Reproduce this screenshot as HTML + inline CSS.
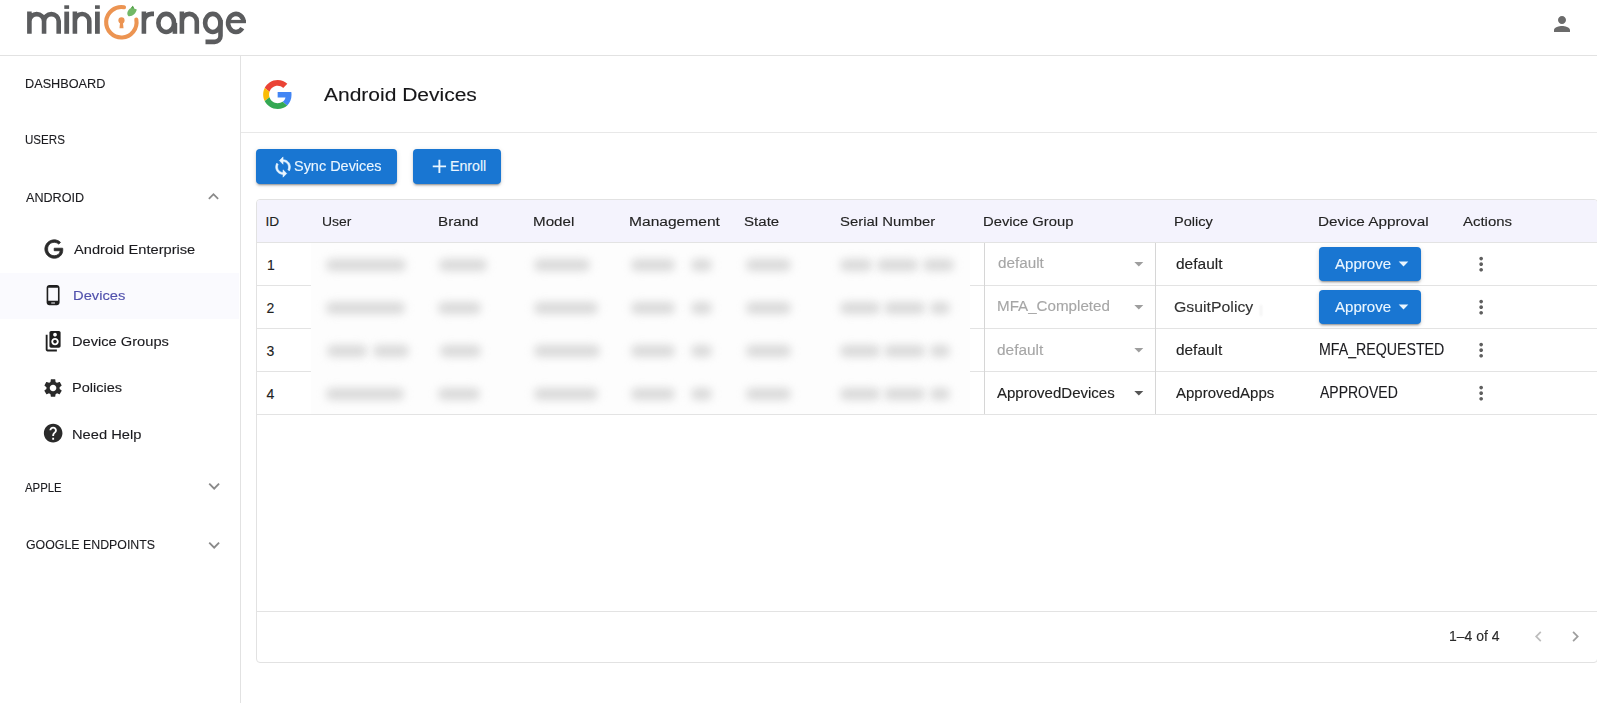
<!DOCTYPE html>
<html><head><meta charset="utf-8"><title>Android Devices</title>
<style>
html,body{margin:0;padding:0;}
body{width:1597px;height:703px;overflow:hidden;background:#fff;position:relative;font-family:"Liberation Sans",sans-serif;}
.t{position:absolute;white-space:nowrap;line-height:1;transform-origin:0 0;-webkit-text-stroke:0.12px currentColor;}
.ic{position:absolute;overflow:visible;}
.ln{position:absolute;background:#e3e3e3;}
.btn{position:absolute;background:#1976d2;border-radius:4px;box-shadow:0 3px 1px -2px rgba(0,0,0,.2),0 2px 2px 0 rgba(0,0,0,.14),0 1px 5px 0 rgba(0,0,0,.12);}
.blob{position:absolute;background:#d9d9d9;border-radius:6px;filter:blur(4px);}
</style></head><body>
<svg class="ic" style="left:0;top:0;width:260px;height:55px" viewBox="0 0 260 55">
<g fill="none" stroke="#5b5c5e" stroke-width="4.6">
<path d="M29.4 11.6 V33.8 M29.4 21.2 A7.33 7.33 0 0 1 44.05 21.2 V33.8 M44.05 21.2 A7.33 7.33 0 0 1 58.7 21.2 V33.8"/>
<path d="M74.9 11.6 V33.8 M74.9 21.2 A7.2 7.2 0 0 1 89.3 21.2 V33.8"/>
<path d="M143.9 11.6 V33.8 M143.9 21.5 A7.6 7.6 0 0 1 151.5 13.9 H154"/>
<ellipse cx="166.2" cy="22.95" rx="7.85" ry="9.05"/>
<path d="M174.9 22.95 V33.8"/>
<path d="M181.9 11.6 V33.8 M181.9 21.35 A7.45 7.45 0 0 1 196.8 21.35 V33.8"/>
<ellipse cx="212.8" cy="22.95" rx="7.7" ry="9.05"/>
<path d="M220.5 20 V36 A5.9 5.9 0 0 1 214.6 41.9 H205.5"/>
<path d="M243.7 22.95 A7.8 9.05 0 1 0 242.3 28.1"/>
</g>
<g fill="#5b5c5e">
<rect x="227.5" y="19.9" width="18.4" height="3.3"/>
<rect x="64.3" y="11.6" width="4.8" height="22.2"/>
<rect x="64.3" y="5.3" width="4.8" height="3.6"/>
<rect x="95" y="11.6" width="4.8" height="22.2"/>
<rect x="95" y="5.3" width="4.8" height="3.6"/>
</g>
<path d="M136.32 19.61 A15.2 15.2 0 1 1 123.99 7.28" fill="none" stroke="#ec9452" stroke-width="4.1" stroke-linecap="round"/>
<circle cx="121.5" cy="20.4" r="3.1" fill="#ec9452"/>
<path d="M120.2 21 L122.8 21 L123.5 28.2 L119.5 28.2 Z" fill="#ec9452"/>
<path d="M128.5 16.3 C126.3 14 127.3 10 131 8 L132.8 5.8 L134.2 8.6 L136.8 9.6 C136 13.5 132.5 16.8 128.5 16.3 Z" fill="#72b866"/>
<path d="M131 8 L132.8 5.8 L134.2 8.6 Z" fill="#55a04a"/>
</svg>

<div class="ln" style="left:0;top:55px;width:1597px;height:1px;background:#e2e2e2"></div>
<div class="ln" style="left:240px;top:56px;width:1px;height:647px;background:#e2e2e2"></div>
<div style="position:absolute;left:0;top:273px;width:239px;height:46px;background:#fafafe"></div>
<div class="ln" style="left:241px;top:132px;width:1356px;height:1px;background:#e8e8e8"></div>
<svg class="ic" style="left:263.3px;top:79.8px;width:29.3px;height:29px" viewBox="0 0 48 48">
<path fill="#EA4335" d="M24 9.5c3.54 0 6.71 1.22 9.21 3.6l6.85-6.85C35.9 2.38 30.47 0 24 0 14.62 0 6.51 5.38 2.56 13.22l7.980 6.19C12.43 13.72 17.74 9.5 24 9.5z"/>
<path fill="#4285F4" d="M46.98 24.55c0-1.57-.15-3.09-.38-4.55H24v9.02h12.94c-.58 2.96-2.26 5.48-4.78 7.18l7.73 6c4.51-4.18 7.090-10.36 7.09-17.65z"/>
<path fill="#FBBC05" d="M10.53 28.59c-.48-1.45-.76-2.99-.76-4.59s.27-3.14.76-4.59l-7.98-6.19C.92 16.46 0 20.12 0 24c0 3.88.92 7.54 2.56 10.78l7.97-6.19z"/>
<path fill="#34A853" d="M24 48c6.48 0 11.93-2.13 15.89-5.81l-7.73-6c-2.15 1.450-4.92 2.3-8.16 2.3-6.26 0-11.57-4.22-13.47-9.91l-7.98 6.19C6.51 42.62 14.62 48 24 48z"/>
</svg>
<div class="btn" style="left:256px;top:149px;width:141px;height:35px"></div>
<div class="btn" style="left:413px;top:149px;width:88px;height:35px"></div>
<div style="position:absolute;left:256px;top:199px;width:1340px;height:462px;border:1px solid #e2e2e2;border-radius:4px;"></div>
<div style="position:absolute;left:257px;top:200px;width:1340px;height:42px;background:#f4f3fd;border-radius:3px 3px 0 0"></div>
<div class="ln" style="left:257px;top:242px;width:1340px;height:1px"></div>
<div style="position:absolute;left:311px;top:243px;width:659px;height:171px;background:#fdfdfd"></div>
<div class="ln" style="left:257px;top:285px;width:54px;height:1px"></div>
<div class="ln" style="left:257px;top:328px;width:54px;height:1px"></div>
<div class="ln" style="left:257px;top:371px;width:54px;height:1px"></div>
<div class="ln" style="left:970px;top:285px;width:627px;height:1px"></div>
<div class="ln" style="left:970px;top:328px;width:627px;height:1px"></div>
<div class="ln" style="left:970px;top:371px;width:627px;height:1px"></div>
<div class="ln" style="left:257px;top:414px;width:1340px;height:1px"></div>
<div class="ln" style="left:984px;top:243px;width:1px;height:171px;background:#d6d6d6"></div>
<div class="ln" style="left:1155px;top:243px;width:1px;height:171px;background:#d6d6d6"></div>
<div class="ln" style="left:257px;top:611px;width:1340px;height:1px"></div>
<div class="btn" style="left:1319px;top:247px;width:102px;height:34px"></div>
<div class="btn" style="left:1319px;top:290px;width:102px;height:34px"></div>
<div class="blob" style="left:325.5px;top:258.5px;width:80.5px;height:12px"></div>
<div class="blob" style="left:439.0px;top:258.5px;width:47.7px;height:12px"></div>
<div class="blob" style="left:534.0px;top:258.5px;width:56.0px;height:12px"></div>
<div class="blob" style="left:631.0px;top:258.5px;width:44.0px;height:12px"></div>
<div class="blob" style="left:691.0px;top:258.5px;width:21.0px;height:12px"></div>
<div class="blob" style="left:745.5px;top:258.5px;width:45.5px;height:12px"></div>
<div class="blob" style="left:840.0px;top:258.5px;width:32.0px;height:12px"></div>
<div class="blob" style="left:877.0px;top:258.5px;width:41.0px;height:12px"></div>
<div class="blob" style="left:923.0px;top:258.5px;width:31.0px;height:12px"></div>
<div class="blob" style="left:325.5px;top:301.5px;width:79.5px;height:12px"></div>
<div class="blob" style="left:438.0px;top:301.5px;width:42.5px;height:12px"></div>
<div class="blob" style="left:534.0px;top:301.5px;width:64.0px;height:12px"></div>
<div class="blob" style="left:631.0px;top:301.5px;width:44.0px;height:12px"></div>
<div class="blob" style="left:691.0px;top:301.5px;width:21.0px;height:12px"></div>
<div class="blob" style="left:745.5px;top:301.5px;width:45.5px;height:12px"></div>
<div class="blob" style="left:840.0px;top:301.5px;width:40.0px;height:12px"></div>
<div class="blob" style="left:884.0px;top:301.5px;width:41.0px;height:12px"></div>
<div class="blob" style="left:930.0px;top:301.5px;width:20.0px;height:12px"></div>
<div class="blob" style="left:326.5px;top:344.5px;width:40.5px;height:12px"></div>
<div class="blob" style="left:373.0px;top:344.5px;width:36.0px;height:12px"></div>
<div class="blob" style="left:440.0px;top:344.5px;width:40.5px;height:12px"></div>
<div class="blob" style="left:534.0px;top:344.5px;width:66.0px;height:12px"></div>
<div class="blob" style="left:631.0px;top:344.5px;width:44.0px;height:12px"></div>
<div class="blob" style="left:691.0px;top:344.5px;width:21.0px;height:12px"></div>
<div class="blob" style="left:745.5px;top:344.5px;width:45.5px;height:12px"></div>
<div class="blob" style="left:840.0px;top:344.5px;width:40.0px;height:12px"></div>
<div class="blob" style="left:884.0px;top:344.5px;width:41.0px;height:12px"></div>
<div class="blob" style="left:930.0px;top:344.5px;width:20.0px;height:12px"></div>
<div class="blob" style="left:325.5px;top:387.5px;width:78.5px;height:12px"></div>
<div class="blob" style="left:438.0px;top:387.5px;width:42.0px;height:12px"></div>
<div class="blob" style="left:534.0px;top:387.5px;width:64.0px;height:12px"></div>
<div class="blob" style="left:631.0px;top:387.5px;width:44.0px;height:12px"></div>
<div class="blob" style="left:691.0px;top:387.5px;width:21.0px;height:12px"></div>
<div class="blob" style="left:745.5px;top:387.5px;width:45.5px;height:12px"></div>
<div class="blob" style="left:840.0px;top:387.5px;width:40.0px;height:12px"></div>
<div class="blob" style="left:884.0px;top:387.5px;width:41.0px;height:12px"></div>
<div class="blob" style="left:930.0px;top:387.5px;width:20.0px;height:12px"></div>
<div style="position:absolute;left:1260px;top:305px;width:2px;height:11px;background:#d8d8d8;filter:blur(0.8px);opacity:.35"></div>
<svg class="ic" style="left:42.73px;top:238.36px;width:22.08px;height:22.08px" viewBox="0 0 24 24" preserveAspectRatio="none"><path fill="#2a2a2a" stroke="#2a2a2a" stroke-width="0.9" d="M21.35 11.1h-9.17v2.73h6.51c-.33 3.81-3.5 5.44-6.5 5.44C8.36 19.27 5 16.25 5 12c0-4.1 3.2-7.27 7.2-7.27 3.09 0 4.9 1.97 4.9 1.97L19 4.72S16.56 2 12.1 2C6.42 2 2.03 6.8 2.03 12c0 5.05 4.13 10 10.22 10 5.35 0 9.25-3.67 9.25-9.09 0-1.15-.15-1.81-.15-1.81z"/></svg>
<svg class="ic" style="left:42.17px;top:284.47px;width:22.20px;height:22.20px" viewBox="0 0 24 24" preserveAspectRatio="none"><path fill="#1f1f1f" d="M16 1H8C6.34 1 5 2.34 5 4v16c0 1.66 1.34 3 3 3h8c1.66 0 3-1.34 3-3V4c0-1.66-1.34-3-3-3zm-2 20h-4v-1h4v1zm3.25-3H6.75V4h10.5v14z"/></svg>
<svg class="ic" style="left:41.98px;top:330.07px;width:22.32px;height:22.32px" viewBox="0 0 24 24" preserveAspectRatio="none"><path fill="#1f1f1f" d="M18.2 1H9.8C8.81 1 8 1.81 8 2.8v14.4c0 .99.81 1.79 1.8 1.79l8.4.01c.99 0 1.8-.81 1.8-1.8V2.8c0-.99-.81-1.8-1.8-1.8zM14 3c1.1 0 2 .89 2 2s-.9 2-2 2-2-.89-2-2 .9-2 2-2zm0 13.5c-2.21 0-4-1.79-4-4s1.79-4 4-4 4 1.79 4 4-1.79 4-4 4zM14 10.5c-1.1 0-2 .9-2 2s.9 2 2 2 2-.9 2-2-.9-2-2-2zM6 5H4v16c0 1.1.89 2 2 2h10v-2H6V5z"/></svg>
<svg class="ic" style="left:42.15px;top:377.16px;width:22.08px;height:22.08px" viewBox="0 0 24 24" preserveAspectRatio="none"><path fill="#2a2a2a" d="M19.14 12.94c.04-.3.06-.61.06-.94 0-.32-.02-.64-.07-.94l2.03-1.58c.18-.14.23-.41.12-.61l-1.92-3.32c-.12-.22-.37-.29-.59-.22l-2.39.96c-.5-.38-1.03-.7-1.62-.94l-.36-2.54c-.04-.24-.24-.41-.48-.41h-3.84c-.24 0-.43.17-.47.41l-.36 2.54c-.59.24-1.13.57-1.62.94l-2.39-.96c-.22-.08-.47 0-.59.22L2.74 8.87c-.12.21-.08.47.12.61l2.03 1.58c-.05.3-.09.63-.09.94s.02.64.07.94l-2.03 1.58c-.18.14-.23.41-.12.61l1.92 3.32c.12.22.37.29.59.22l2.39-.96c.5.38 1.03.7 1.62.94l.36 2.54c.05.24.24.41.48.41h3.84c.24 0 .44-.17.47-.41l.36-2.54c.59-.24 1.13-.56 1.62-.94l2.39.96c.22.08.47 0 .59-.22l1.92-3.32c.12-.22.07-.47-.12-.61l-2.01-1.58zM12 15.6c-1.98 0-3.6-1.62-3.6-3.6s1.62-3.6 3.6-3.6 3.6 1.62 3.6 3.6-1.62 3.6-3.6 3.6z"/></svg>
<svg class="ic" style="left:42.04px;top:421.94px;width:22.32px;height:22.32px" viewBox="0 0 24 24" preserveAspectRatio="none"><path fill="#2a2a2a" d="M12 2C6.48 2 2 6.48 2 12s4.48 10 10 10 10-4.48 10-10S17.52 2 12 2zm1 17h-2v-2h2v2zm2.07-7.75l-.9.92C13.45 12.9 13 13.5 13 15h-2v-.5c0-1.1.45-2.1 1.17-2.83l1.24-1.26c.37-.36.59-.86.59-1.41 0-1.1-.9-2-2-2s-2 .9-2 2H8c0-2.21 1.79-4 4-4s4 1.79 4 4c0 .88-.36 1.68-.93 2.25z"/></svg>
<svg class="ic" style="left:203.25px;top:186.00px;width:21.00px;height:21.00px" viewBox="0 0 24 24" preserveAspectRatio="none"><path fill="#8a8a8a" d="M12 8l-6 6 1.41 1.41L12 10.83l4.59 4.58L18 14z"/></svg>
<svg class="ic" style="left:202.62px;top:474.51px;width:22.32px;height:22.32px" viewBox="0 0 24 24" preserveAspectRatio="none"><path fill="#8a8a8a" d="M16.59 8.59L12 13.17 7.41 8.59 6 10l6 6 6-6z"/></svg>
<svg class="ic" style="left:202.62px;top:533.81px;width:22.32px;height:22.32px" viewBox="0 0 24 24" preserveAspectRatio="none"><path fill="#8a8a8a" d="M16.59 8.59L12 13.17 7.41 8.59 6 10l6 6 6-6z"/></svg>
<svg class="ic" style="left:271.62px;top:155.68px;width:22.08px;height:22.08px" viewBox="0 0 24 24" preserveAspectRatio="none"><path fill="#eaf6ff" stroke="#eaf6ff" stroke-width="0.6" d="M12 4V1L8 5l4 4V6c3.31 0 6 2.69 6 6 0 1.01-.25 1.97-.7 2.8l1.46 1.46C19.54 15.03 20 13.57 20 12c0-4.42-3.58-8-8-8zm0 14c-3.31 0-6-2.69-6-6 0-1.01.25-1.97.7-2.8L5.24 7.74C4.46 8.97 4 10.43 4 12c0 4.42 3.58 8 8 8v3l4-4-4-4v3z"/></svg>
<svg class="ic" style="left:427.75px;top:155.15px;width:22.80px;height:22.80px" viewBox="0 0 24 24" preserveAspectRatio="none"><path fill="#eaf6ff" d="M19 13h-6v6h-2v-6H5v-2h6V5h2v6h6v2z"/></svg>
<svg class="ic" style="left:1127.50px;top:253.40px;width:21.60px;height:21.60px" viewBox="0 0 24 24" preserveAspectRatio="none"><path fill="#9e9e9e" d="M7 10l5 5 5-5z"/></svg>
<svg class="ic" style="left:1127.50px;top:296.40px;width:21.60px;height:21.60px" viewBox="0 0 24 24" preserveAspectRatio="none"><path fill="#9e9e9e" d="M7 10l5 5 5-5z"/></svg>
<svg class="ic" style="left:1127.50px;top:339.40px;width:21.60px;height:21.60px" viewBox="0 0 24 24" preserveAspectRatio="none"><path fill="#9e9e9e" d="M7 10l5 5 5-5z"/></svg>
<svg class="ic" style="left:1127.50px;top:382.40px;width:21.60px;height:21.60px" viewBox="0 0 24 24" preserveAspectRatio="none"><path fill="#555" d="M7 10l5 5 5-5z"/></svg>
<svg class="ic" style="left:1391.88px;top:252.40px;width:23.04px;height:23.04px" viewBox="0 0 24 24" preserveAspectRatio="none"><path fill="#eaf6ff" d="M7 10l5 5 5-5z"/></svg>
<svg class="ic" style="left:1391.88px;top:295.40px;width:23.04px;height:23.04px" viewBox="0 0 24 24" preserveAspectRatio="none"><path fill="#eaf6ff" d="M7 10l5 5 5-5z"/></svg>
<svg class="ic" style="left:1470.20px;top:253.28px;width:22.32px;height:22.32px" viewBox="0 0 24 24" preserveAspectRatio="none"><path fill="#5f5f5f" d="M12 8c1.1 0 2-.9 2-2s-.9-2-2-2-2 .9-2 2 .9 2 2 2zm0 2c-1.1 0-2 .9-2 2s.9 2 2 2 2-.9 2-2-.9-2-2-2zm0 6c-1.1 0-2 .9-2 2s.9 2 2 2 2-.9 2-2-.9-2-2-2z"/></svg>
<svg class="ic" style="left:1470.20px;top:296.28px;width:22.32px;height:22.32px" viewBox="0 0 24 24" preserveAspectRatio="none"><path fill="#5f5f5f" d="M12 8c1.1 0 2-.9 2-2s-.9-2-2-2-2 .9-2 2 .9 2 2 2zm0 2c-1.1 0-2 .9-2 2s.9 2 2 2 2-.9 2-2-.9-2-2-2zm0 6c-1.1 0-2 .9-2 2s.9 2 2 2 2-.9 2-2-.9-2-2-2z"/></svg>
<svg class="ic" style="left:1470.20px;top:339.28px;width:22.32px;height:22.32px" viewBox="0 0 24 24" preserveAspectRatio="none"><path fill="#5f5f5f" d="M12 8c1.1 0 2-.9 2-2s-.9-2-2-2-2 .9-2 2 .9 2 2 2zm0 2c-1.1 0-2 .9-2 2s.9 2 2 2 2-.9 2-2-.9-2-2-2zm0 6c-1.1 0-2 .9-2 2s.9 2 2 2 2-.9 2-2-.9-2-2-2z"/></svg>
<svg class="ic" style="left:1470.20px;top:382.28px;width:22.32px;height:22.32px" viewBox="0 0 24 24" preserveAspectRatio="none"><path fill="#5f5f5f" d="M12 8c1.1 0 2-.9 2-2s-.9-2-2-2-2 .9-2 2 .9 2 2 2zm0 2c-1.1 0-2 .9-2 2s.9 2 2 2 2-.9 2-2-.9-2-2-2zm0 6c-1.1 0-2 .9-2 2s.9 2 2 2 2-.9 2-2-.9-2-2-2z"/></svg>
<svg class="ic" style="left:1527.64px;top:626.18px;width:20.88px;height:20.88px" viewBox="0 0 24 24" preserveAspectRatio="none"><path fill="#bdbdbd" d="M15.41 7.41L14 6l-6 6 6 6 1.41-1.41L10.83 12z"/></svg>
<svg class="ic" style="left:1565.33px;top:626.18px;width:20.88px;height:20.88px" viewBox="0 0 24 24" preserveAspectRatio="none"><path fill="#9e9e9e" d="M10 6L8.59 7.41 13.17 12l-4.58 4.59L10 18l6-6z"/></svg>
<svg class="ic" style="left:1550.00px;top:12.16px;width:24.00px;height:24.00px" viewBox="0 0 24 24" preserveAspectRatio="none"><path fill="#6b6b6b" d="M12 12c2.21 0 4-1.79 4-4s-1.79-4-4-4-4 1.79-4 4 1.79 4 4 4zm0 2c-2.67 0-8 1.34-8 4v2h16v-2c0-2.66-5.33-4-8-4z"/></svg>
<div id="t_dash" class="t" style="left:24.50px;top:77.40px;font-size:13.3px;color:#1b1b1f;transform:scaleX(0.9548);">DASHBOARD</div>
<div id="t_users" class="t" style="left:24.50px;top:133.29px;font-size:13.3px;color:#1b1b1f;transform:scaleX(0.8714);">USERS</div>
<div id="t_android" class="t" style="left:25.50px;top:190.50px;font-size:13.3px;color:#1b1b1f;transform:scaleX(0.9477);">ANDROID</div>
<div id="t_apple" class="t" style="left:25.00px;top:480.50px;font-size:13.3px;color:#1b1b1f;transform:scaleX(0.8560);">APPLE</div>
<div id="t_gep" class="t" style="left:25.50px;top:538.40px;font-size:13.3px;color:#1b1b1f;transform:scaleX(0.9291);">GOOGLE ENDPOINTS</div>
<div id="t_ae" class="t" style="left:73.50px;top:243.04px;font-size:13.6px;color:#1b1b1f;transform:scaleX(1.0770);">Android Enterprise</div>
<div id="t_dev" class="t" style="left:72.50px;top:288.84px;font-size:13.6px;color:#5050ac;transform:scaleX(1.0833);">Devices</div>
<div id="t_dg" class="t" style="left:72.00px;top:335.24px;font-size:13.6px;color:#1b1b1f;transform:scaleX(1.0772);">Device Groups</div>
<div id="t_pol" class="t" style="left:72.00px;top:381.44px;font-size:13.6px;color:#1b1b1f;transform:scaleX(1.0687);">Policies</div>
<div id="t_help" class="t" style="left:72.00px;top:427.64px;font-size:13.6px;color:#1b1b1f;transform:scaleX(1.0811);">Need Help</div>
<div id="t_title" class="t" style="left:324.00px;top:85.53px;font-size:18.9px;color:#161618;transform:scaleX(1.1111);">Android Devices</div>
<div id="t_sync" class="t" style="left:294.00px;top:158.93px;font-size:14.2px;color:#eaf6ff;transform:scaleX(1.0188);">Sync Devices</div>
<div id="t_enroll" class="t" style="left:450.00px;top:158.93px;font-size:14.2px;color:#eaf6ff;transform:scaleX(1.0000);">Enroll</div>
<div id="h_id" class="t" style="left:265.50px;top:214.75px;font-size:13.7px;color:#222;transform:scaleX(1.0000);">ID</div>
<div id="h_user" class="t" style="left:322.00px;top:214.75px;font-size:13.7px;color:#222;transform:scaleX(1.0160);">User</div>
<div id="h_brand" class="t" style="left:437.50px;top:214.75px;font-size:13.7px;color:#222;transform:scaleX(1.1103);">Brand</div>
<div id="h_model" class="t" style="left:533.00px;top:214.75px;font-size:13.7px;color:#222;transform:scaleX(1.1088);">Model</div>
<div id="h_mgmt" class="t" style="left:629.00px;top:214.75px;font-size:13.7px;color:#222;transform:scaleX(1.1376);">Management</div>
<div id="h_state" class="t" style="left:743.50px;top:214.75px;font-size:13.7px;color:#222;transform:scaleX(1.1015);">State</div>
<div id="h_serial" class="t" style="left:839.50px;top:214.75px;font-size:13.7px;color:#222;transform:scaleX(1.0879);">Serial Number</div>
<div id="h_dg" class="t" style="left:983.00px;top:214.75px;font-size:13.7px;color:#222;transform:scaleX(1.0808);">Device Group</div>
<div id="h_policy" class="t" style="left:1174.00px;top:214.75px;font-size:13.7px;color:#222;transform:scaleX(1.0654);">Policy</div>
<div id="h_appr" class="t" style="left:1318.00px;top:214.75px;font-size:13.7px;color:#222;transform:scaleX(1.1188);">Device Approval</div>
<div id="h_actions" class="t" style="left:1462.50px;top:214.75px;font-size:13.7px;color:#222;transform:scaleX(1.0915);">Actions</div>
<div id="r1_id" class="t" style="left:267.00px;top:257.60px;font-size:14.0px;color:#222;transform:scaleX(1.0000);">1</div>
<div id="r2_id" class="t" style="left:266.50px;top:300.60px;font-size:14.0px;color:#222;transform:scaleX(1.0000);">2</div>
<div id="r3_id" class="t" style="left:266.50px;top:343.60px;font-size:14.0px;color:#222;transform:scaleX(1.0000);">3</div>
<div id="r4_id" class="t" style="left:266.50px;top:386.60px;font-size:14.0px;color:#222;transform:scaleX(1.0000);">4</div>
<div id="r1_dg" class="t" style="left:998.00px;top:256.30px;font-size:14.0px;color:#a6a6a6;transform:scaleX(1.0912);">default</div>
<div id="r2_dg" class="t" style="left:997.00px;top:299.40px;font-size:14.0px;color:#a6a6a6;transform:scaleX(1.0826);">MFA_Completed</div>
<div id="r3_dg" class="t" style="left:997.00px;top:342.90px;font-size:14.0px;color:#a6a6a6;transform:scaleX(1.1007);">default</div>
<div id="r4_dg" class="t" style="left:997.00px;top:385.90px;font-size:14.0px;color:#222;transform:scaleX(1.0729);">ApprovedDevices</div>
<div id="r1_pol" class="t" style="left:1176.00px;top:257.14px;font-size:14.3px;color:#222;transform:scaleX(1.0830);">default</div>
<div id="r2_pol" class="t" style="left:1174.00px;top:300.14px;font-size:14.3px;color:#333;transform:scaleX(1.1083);">GsuitPolicy</div>
<div id="r3_pol" class="t" style="left:1176.00px;top:343.35px;font-size:14.3px;color:#222;transform:scaleX(1.0760);">default</div>
<div id="r4_pol" class="t" style="left:1176.00px;top:386.35px;font-size:14.3px;color:#222;transform:scaleX(1.0477);">ApprovedApps</div>
<div id="r1_ap" class="t" style="left:1334.50px;top:257.43px;font-size:14.2px;color:#eaf6ff;transform:scaleX(1.0605);">Approve</div>
<div id="r2_ap" class="t" style="left:1334.50px;top:300.43px;font-size:14.2px;color:#eaf6ff;transform:scaleX(1.0605);">Approve</div>
<div id="r3_ap" class="t" style="left:1319.00px;top:341.69px;font-size:15.9px;color:#1b1b1f;transform:scaleX(0.8921);">MFA_REQUESTED</div>
<div id="r4_ap" class="t" style="left:1319.50px;top:384.64px;font-size:15.6px;color:#1b1b1f;transform:scaleX(0.8977);">APPROVED</div>
<div id="t_pag" class="t" style="left:1448.50px;top:628.89px;font-size:14.6px;color:#2a2a2a;transform:scaleX(0.9579);">1–4 of 4</div>
</body></html>
